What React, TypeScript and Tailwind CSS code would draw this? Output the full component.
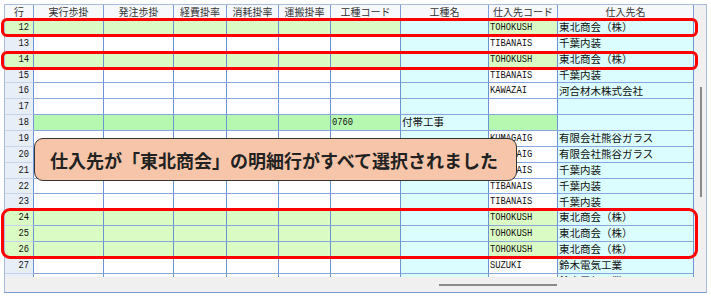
const COLS = ["行", "実行歩掛", "発注歩掛", "経費掛率", "消耗掛率", "運搬掛率", "工種コード", "工種名", "仕入先コード", "仕入先名"];
const WIDTHS = ["w-[29px]", "w-[70px]", "w-[70px]", "w-[53px]", "w-[52px]", "w-[52px]", "w-[70px]", "w-[88px]", "w-[69px]", "w-[136px]"];

type Row = {
  n: number;
  sel?: boolean;
  hl?: boolean;
  kcode?: string;
  kname?: string;
  code?: string;
  name?: string;
};

const rows: Row[] = [
  { n: 12, sel: true, code: "TOHOKUSH", name: "東北商会（株）" },
  { n: 13, code: "TIBANAIS", name: "千葉内装" },
  { n: 14, sel: true, code: "TOHOKUSH", name: "東北商会（株）" },
  { n: 15, code: "TIBANAIS", name: "千葉内装" },
  { n: 16, code: "KAWAZAI", name: "河合材木株式会社" },
  { n: 17 },
  { n: 18, hl: true, kcode: "0760", kname: "付帯工事" },
  { n: 19, code: "KUMAGAIG", name: "有限会社熊谷ガラス" },
  { n: 20, code: "KUMAGAIG", name: "有限会社熊谷ガラス" },
  { n: 21, code: "TIBANAIS", name: "千葉内装" },
  { n: 22, code: "TIBANAIS", name: "千葉内装" },
  { n: 23, code: "TIBANAIS", name: "千葉内装" },
  { n: 24, sel: true, code: "TOHOKUSH", name: "東北商会（株）" },
  { n: 25, sel: true, code: "TOHOKUSH", name: "東北商会（株）" },
  { n: 26, sel: true, code: "TOHOKUSH", name: "東北商会（株）" },
  { n: 27, code: "SUZUKI", name: "鈴木電気工業" },
  { n: 28, code: "SUZUKI", name: "鈴木電気工業" },
];

const cellBg = (row: Row, i: number) => {
  if (i === 7 || i === 9) return "bg-[#dcfdfd]";
  if (row.sel) return "bg-[#dbfbc5]";
  if (i === 0) return "bg-[#e8eef8]";
  if (row.hl) return "bg-[#b7f8b1]";
  return "bg-white";
};

const Mono = ({ text }: { text: string }) => (
  <span className="inline-block translate-y-[1px] scale-y-125 font-['Liberation_Mono',monospace] text-[8.8px] leading-none text-[#111]">
    {text}
  </span>
);

const Jp = ({ text }: { text: string }) => (
  <span className="font-['Noto_Sans_CJK_JP',sans-serif] text-[10.5px] leading-none text-[#111]">{text}</span>
);

const cellText = (row: Row, i: number) => {
  if (i === 0) return <Mono text={String(row.n)} />;
  if (i === 6 && row.kcode) return <Mono text={row.kcode} />;
  if (i === 7 && row.kname) return <Jp text={row.kname} />;
  if (i === 8 && row.code) return <Mono text={row.code} />;
  if (i === 9 && row.name) return <Jp text={row.name} />;
  return null;
};

const GridRow = ({ row }: { row: Row }) => (
  <div className="flex h-[15.86px] shrink-0">
    {WIDTHS.map((w, i) => (
      <div
        key={i}
        className={`${w} ${cellBg(row, i)} flex shrink-0 items-center overflow-hidden border-r border-b border-r-[#6d94d2] ${
          i === 0 ? "justify-end border-b-[#c6d3ea] pr-[4px]" : "border-b-[#86a6dc] pl-[1px]"
        }`}
      >
        {cellText(row, i)}
      </div>
    ))}
  </div>
);

export default function App() {
  return (
    <div className="relative h-[296px] w-[711px] overflow-hidden bg-white pl-[4px] pt-[4px]">
      <div className="flex h-[289px] w-[703px] flex-col border border-[#a9bdda] border-b-[#7a9bd0]">
        <div className="flex h-[272px] shrink-0">
          <div className="flex w-[689px] shrink-0 flex-col overflow-hidden">
            <div className="flex h-[15px] shrink-0 bg-[#f6f8fc]">
              {COLS.map((c, i) => (
                <div
                  key={c}
                  className={`${WIDTHS[i]} flex shrink-0 items-center justify-center border-r border-b border-r-[#7fa0d6] border-b-[#c3d0e8] font-['Noto_Sans_CJK_JP',sans-serif] text-[10px] leading-none text-[#333]`}
                >
                  {c}
                </div>
              ))}
            </div>
            {rows.map((r) => (
              <GridRow key={r.n} row={r} />
            ))}
          </div>
          <div className="w-[12px] shrink-0 bg-[#f0f0f0] pl-[6px] pt-[82px]">
            <div className="h-[110px] w-[2px] bg-[#8a8a8a]" />
          </div>
        </div>
        <div className="h-[15px] shrink-0 bg-[#f0f0f0] pl-[434px] pt-[7px]">
          <div className="h-[2px] w-[118px] bg-[#8a8a8a]" />
        </div>
      </div>

      {/* selection outlines */}
      <div className="absolute left-[1px] top-[18px] h-[19px] w-[697px] rounded-[6px] border-[3px] border-[#ff0000]" />
      <div className="absolute left-[1px] top-[51px] h-[19px] w-[697px] rounded-[6px] border-[3px] border-[#ff0000]" />
      <div className="absolute left-[1px] top-[208px] h-[51px] w-[697px] rounded-[9px] border-[3px] border-[#ff0000]" />

      {/* callout */}
      <div className="absolute left-[34px] top-[138px] flex h-[43px] w-[483px] items-center rounded-[9px] border border-[#333] bg-[#f7c6aa] pl-[15px]">
        <span className="font-['Noto_Sans_CJK_JP',sans-serif] text-[18px] font-bold leading-none text-[#222]">
          仕入先が「東北商会」の明細行がすべて選択されました
        </span>
      </div>
    </div>
  );
}
